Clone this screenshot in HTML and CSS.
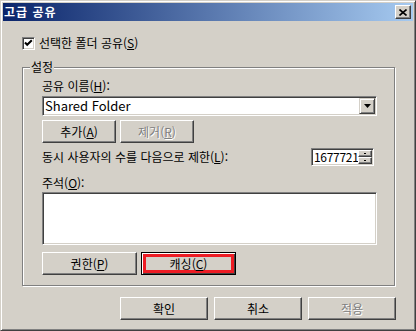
FILE: index.html
```html
<!DOCTYPE html>
<html lang="ko">
<head>
  <meta charset="UTF-8" />
  <title>고급 공유</title>
  <link rel="stylesheet" href="styles.css">
</head>
<body>
  <div class="window">
    <div class="titlebar">
      <span class="title">고급 공유</span>
      <button class="close">
        <svg width="8" height="7" viewBox="0 0 8 7"><path d="M0.5 0.5 L7.5 6.5 M7.5 0.5 L0.5 6.5" stroke="#000" stroke-width="1.6" fill="none"/></svg>
      </button>
    </div>

    <div class="content">
      <label class="check-row">
        <span class="checkbox">
          <svg width="9" height="9" viewBox="0 0 9 9"><path d="M1 3.5 L3.2 5.8 L7.8 1.2" stroke="#000" stroke-width="2" fill="none"/></svg>
        </span>
        <span>선택한 폴더 공유(<u>S</u>)</span>
      </label>

      <fieldset class="group">
        <legend>설정</legend>
        <div class="label">공유 이름(<u>H</u>):</div>
        <div class="combo">
          <span class="combo-text">Shared Folder</span>
          <span class="drop">
            <svg width="7" height="4" viewBox="0 0 7 4"><path d="M0 0 H7 L3.5 4 Z" fill="#000"/></svg>
          </span>
        </div>
        <div class="btn-row">
          <button class="btn small">추가(<u>A</u>)</button>
          <button class="btn small" disabled>제거(<u>R</u>)</button>
        </div>
        <div class="limit-row">
          <span>동시 사용자의 수를 다음으로 제한(<u>L</u>):</span>
          <div class="spin">
            <span class="spin-text">16777216</span>
            <span class="spin-btns">
              <span class="spin-btn"><i></i></span>
              <span class="spin-btn"><i></i></span>
            </span>
          </div>
        </div>
        <div class="label memo-label">주석(<u>O</u>):</div>
        <div class="memo"></div>
        <div class="btn-row bottom">
          <button class="btn wide">권한(<u>P</u>)</button>
          <button class="btn wide default">캐싱(<u>C</u>)</button>
        </div>
      </fieldset>

      <div class="footer">
        <button class="btn action">확인</button>
        <button class="btn action">취소</button>
        <button class="btn action" disabled>적용</button>
      </div>
    </div>
  </div>
</body>
</html>
```

FILE: styles.css
```css
* {
  box-sizing: border-box;
}

body {
  margin: 0;
  font-family: "Noto Sans CJK KR", "Noto Sans", sans-serif;
  font-size: 12px;
  line-height: 14px;
  color: #000;
  background-color: #d4d0c8;
}

u {
  text-underline-offset: 1px;
}

.window {
  width: 416px;
  height: 331px;
  display: flex;
  flex-direction: column;
  padding: 2px;
  background-color: #d4d0c8;
  border: 1px solid;
  border-color: #d4d0c8 #404040 #404040 #d4d0c8;
  box-shadow: inset 1px 1px #fff, inset -1px -1px #808080;
}

.titlebar {
  height: 18px;
  display: flex;
  align-items: center;
  justify-content: space-between;
  padding: 0 2px 0 1px;
  background: linear-gradient(to right, #0a246a, #a6caf0);
}

.title {
  color: #fff;
  font-weight: bold;
  letter-spacing: 1px;
}

.close {
  width: 16px;
  height: 14px;
  padding: 0;
  display: flex;
  align-items: center;
  justify-content: center;
  background-color: #d4d0c8;
  border: 1px solid;
  border-color: #fff #404040 #404040 #fff;
  box-shadow: inset -1px -1px #808080;
}

.content {
  flex: 1;
  display: flex;
  flex-direction: column;
  padding: 15px 18px 0 19px;
}

.check-row {
  height: 14px;
  display: flex;
  align-items: center;
  gap: 4px;
}

.checkbox {
  width: 13px;
  height: 13px;
  display: flex;
  align-items: center;
  justify-content: center;
  background-color: #fff;
  border: 1px solid;
  border-color: #808080 #fff #fff #808080;
  box-shadow: inset 1px 1px #404040, inset -1px -1px #d4d0c8;
}

.group {
  margin: 10px 0 0;
  min-width: 0;
  padding: 5px 17px 10px 19px;
  border: 1px solid #808080;
  box-shadow: inset 1px 1px #fff, 1px 1px #fff;
}

.group legend {
  margin-left: -12px;
  padding: 0 1px;
  line-height: 14px;
  background-color: #d4d0c8;
}

.combo {
  margin-top: 3px;
  height: 20px;
  display: flex;
  align-items: center;
  justify-content: space-between;
  padding-left: 2px;
  background-color: #fff;
  border: 1px solid;
  border-color: #808080 #fff #fff #808080;
  box-shadow: inset 1px 1px #404040, inset -1px -1px #d4d0c8;
}

.combo-text {
  font-size: 13px;
}

.drop {
  width: 16px;
  height: 16px;
  margin-right: 1px;
  display: flex;
  align-items: center;
  justify-content: center;
  background-color: #d4d0c8;
  border: 1px solid;
  border-color: #d4d0c8 #404040 #404040 #d4d0c8;
  box-shadow: inset 1px 1px #fff, inset -1px -1px #808080;
}

.btn {
  height: 23px;
  padding: 0;
  font-family: inherit;
  font-size: 12px;
  color: #000;
  background-color: #d4d0c8;
  border: 1px solid;
  border-color: #fff #404040 #404040 #fff;
  box-shadow: inset -1px -1px #808080;
}

.btn:disabled {
  color: #808080;
  text-shadow: 1px 1px #fff;
}

.btn-row {
  display: flex;
  gap: 4px;
  margin-top: 4px;
}

.btn.small {
  width: 74px;
}

.btn.wide {
  width: 95px;
}

.btn.default {
  border-color: #000;
  box-shadow: inset 1px 1px #fff, inset -1px -1px #404040, inset 0 0 0 4px #ed1c24;
}

.btn-row.bottom {
  margin-top: 7px;
}

.limit-row {
  margin-top: 5px;
  height: 18px;
  display: flex;
  align-items: center;
  justify-content: space-between;
}

.spin {
  width: 63px;
  height: 18px;
  margin-right: 3px;
  display: flex;
  background-color: #fff;
  border: 1px solid;
  border-color: #808080 #fff #fff #808080;
  box-shadow: inset 1px 1px #404040, inset -1px -1px #d4d0c8;
  padding: 1px;
}

.spin-text {
  flex: 1;
  overflow: hidden;
  white-space: nowrap;
  padding-left: 1px;
  font-size: 12px;
  letter-spacing: -0.3px;
  line-height: 14px;
}

.spin-btns {
  width: 14px;
  display: flex;
  flex-direction: column;
}

.spin-btn {
  flex: 1;
  display: flex;
  align-items: center;
  justify-content: center;
  background-color: #d4d0c8;
  border: 1px solid;
  border-color: #fff #404040 #404040 #fff;
  box-shadow: inset -1px -1px #808080;
}

.spin-btn i {
  width: 2px;
  height: 1px;
  background-color: #000;
}

.memo-label {
  margin-top: 10px;
}

.memo {
  margin-top: 2px;
  height: 53px;
  background-color: #fff;
  border: 1px solid;
  border-color: #808080 #fff #fff #808080;
  box-shadow: inset 1px 1px #404040, inset -1px -1px #d4d0c8;
}

.footer {
  display: flex;
  justify-content: flex-end;
  gap: 6px;
  margin: 11px -1px 0 0;
}

.btn.action {
  width: 88px;
}
```
